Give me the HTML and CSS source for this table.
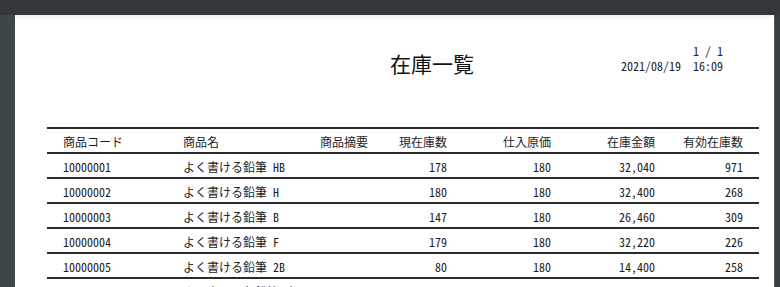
FILE: index.html
```html
<!DOCTYPE html>
<html lang="ja">
<head>
<meta charset="utf-8">
<title>在庫一覧</title>
<link rel="stylesheet" href="styles.css">
</head>
<body>
<div class="topbar"></div>
<div class="viewer">
  <div class="side side-left"></div>
  <div class="page">
    <div class="report-head">
      <h1 class="title">在庫一覧</h1>
      <div class="meta">
        <div class="pageno">1 / 1</div>
        <div class="date">2021/08/19&nbsp;&nbsp;16:09</div>
      </div>
    </div>
    <div class="table">
      <div class="row head">
        <div class="c l">商品コード</div>
        <div class="c l">商品名</div>
        <div class="c r">商品摘要</div>
        <div class="c r">現在庫数</div>
        <div class="c r">仕入原価</div>
        <div class="c r">在庫金額</div>
        <div class="c r">有効在庫数</div>
      </div>
      <div class="row">
        <div class="c l">10000001</div><div class="c l">よく書ける鉛筆 HB</div><div class="c r"></div>
        <div class="c r">178</div><div class="c r">180</div><div class="c r">32,040</div><div class="c r">971</div>
      </div>
      <div class="row">
        <div class="c l">10000002</div><div class="c l">よく書ける鉛筆 H</div><div class="c r"></div>
        <div class="c r">180</div><div class="c r">180</div><div class="c r">32,400</div><div class="c r">268</div>
      </div>
      <div class="row">
        <div class="c l">10000003</div><div class="c l">よく書ける鉛筆 B</div><div class="c r"></div>
        <div class="c r">147</div><div class="c r">180</div><div class="c r">26,460</div><div class="c r">309</div>
      </div>
      <div class="row">
        <div class="c l">10000004</div><div class="c l">よく書ける鉛筆 F</div><div class="c r"></div>
        <div class="c r">179</div><div class="c r">180</div><div class="c r">32,220</div><div class="c r">226</div>
      </div>
      <div class="row">
        <div class="c l">10000005</div><div class="c l">よく書ける鉛筆 2B</div><div class="c r"></div>
        <div class="c r">80</div><div class="c r">180</div><div class="c r">14,400</div><div class="c r">258</div>
      </div>
      <div class="row">
        <div class="c l">10000006</div><div class="c l">よく書ける色鉛筆 赤</div><div class="c r"></div>
        <div class="c r">5</div><div class="c r">180</div><div class="c r">900</div><div class="c r">145</div>
      </div>
    </div>
  </div>
  <div class="side side-right"></div>
</div>
</body>
</html>
```
FILE: styles.css
```css
html, body {
  margin: 0;
  padding: 0;
  height: 287px;
  overflow: hidden;
  background: #383e42;
}
body {
  font-family: "Noto Sans Mono CJK JP", "Noto Sans CJK JP", monospace;
  font-size: 12px;
  color: #1c1c1c;
}
.topbar {
  height: 15px;
  background: #32383c;
}
.viewer {
  display: flex;
  height: 272px;
}
.side-left {
  width: 15px;
  background: #3f464a;
}
.side-right {
  flex: 1;
  background: #393e42;
  border-left: 1px solid #50565a;
}
.page {
  width: 759px;
  background: #ffffff;
  background-image: linear-gradient(#eeeeee, #ffffff 4px);
  padding: 0 15px 0 32px;
  box-sizing: border-box;
}
.report-head {
  display: flex;
  justify-content: space-between;
  padding: 29px 36px 0 343px;
  height: 112px;
  box-sizing: border-box;
}
.title {
  margin: 0;
  padding-top: 5px;
  font-size: 21px;
  font-weight: normal;
  line-height: 28px;
  color: #111;
}
.meta {
  text-align: right;
  line-height: 14px;
}
.date {
  margin-top: 1px;
}
.table {
  width: 712px;
  border-top: 2px solid #2a2a2a;
}
.row {
  display: grid;
  grid-template-columns: 120px 153px 48px 79px 104px 104px 88px 16px;
  height: 25px;
  box-sizing: border-box;
  border-bottom: 2px solid #2a2a2a;
  align-items: center;
  padding-top: 3px;
}
.c {
  white-space: nowrap;
  line-height: 16px;
}
.c.l {
  padding-left: 16px;
}
.c.r {
  text-align: right;
}
```
